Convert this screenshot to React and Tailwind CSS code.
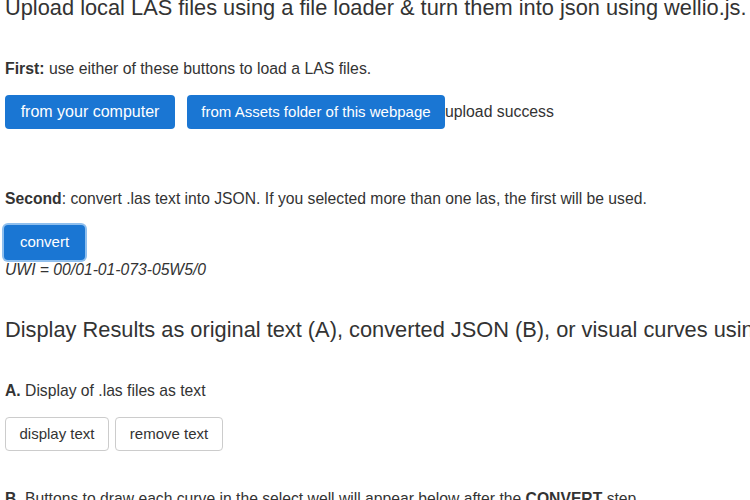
export default function App() {
  return (
    <div className="w-[750px] h-[500px] overflow-hidden bg-white text-[#333] font-['Liberation_Sans',Arial,sans-serif]">
      <div className="px-[5px]">
        {/* ===== UPLOAD ===== */}
        <h1 className="-mt-[6px] text-[21.8px] leading-[28px] whitespace-nowrap">
          Upload local LAS files using a file loader &amp; turn them into json using wellio.js.
        </h1>

        <p className="mt-[37px] text-[15.8px] leading-[20px]">
          <b>First:</b> use either of these buttons to load a LAS files.
        </p>

        <div className="mt-[16px] flex items-center">
          <button className="h-[34px] w-[170px] rounded-[4px] bg-[#1a76d3] text-white text-[16px]">
            from your computer
          </button>
          <button className="ml-[12px] h-[34px] w-[258px] rounded-[4px] bg-[#1a76d3] text-white text-[15px]">
            from Assets folder of this webpage
          </button>
          <span className="text-[15.8px]">upload success</span>
        </div>

        <p className="mt-[60px] text-[15.7px] leading-[20px]">
          <b>Second</b>: convert .las text into JSON. If you selected more than one las, the first will be used.
        </p>

        <button className="mt-[16px] -ml-[1px] h-[35px] w-[81px] rounded-[4px] bg-[#1a76d3] text-white text-[15px] ring-[2px] ring-[#8fbfee]">
          convert
        </button>
        <p className="text-[15.7px] leading-[20px] italic">UWI = 00/01-01-073-05W5/0</p>

        {/* ===== DISPLAY ===== */}
        <h2 className="mt-[36px] text-[21.8px] leading-[28px] whitespace-nowrap">
          Display Results as original text (A), converted JSON (B), or visual curves using wellioviz.js (C)
        </h2>

        <p className="mt-[37px] text-[15.7px] leading-[20px]">
          <b>A.</b> Display of .las files as text
        </p>

        <div className="mt-[16px] flex gap-[6px]">
          <button className="h-[34px] w-[104px] rounded-[4px] border border-[#ccc] bg-white text-[15px]">
            display text
          </button>
          <button className="h-[34px] w-[108px] rounded-[4px] border border-[#ccc] bg-white text-[15px]">
            remove text
          </button>
        </div>

        <p className="mt-[38px] text-[15.7px] leading-[20px] whitespace-nowrap">
          <b>B.</b> Buttons to draw each curve in the select well will appear below after the <b>CONVERT</b> step.
        </p>
      </div>
    </div>
  );
}
